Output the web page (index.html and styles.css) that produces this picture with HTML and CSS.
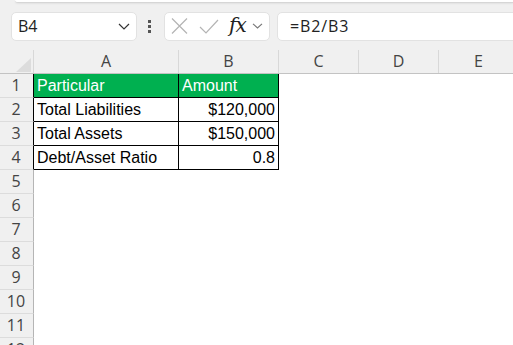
FILE: index.html
```html
<!DOCTYPE html>
<html>
<head>
<meta charset="utf-8">
<link rel="stylesheet" href="styles.css">
</head>
<body>
<div class="app">
  <div class="ribbon-edge"></div>
  <div class="formula-bar">
    <div class="name-box">
      <span class="name-text">B4</span>
      <svg class="chev" width="12" height="7" viewBox="0 0 12 7"><path d="M1 1 L6 6 L11 1" fill="none" stroke="#333" stroke-width="1.2"/></svg>
    </div>
    <div class="kebab"><i></i><i></i><i></i></div>
    <div class="fx-box">
      <svg class="ico" width="17" height="16" viewBox="0 0 17 16"><path d="M1 0.5 L16 15.5 M16 0.5 L1 15.5" fill="none" stroke="#b4b4b4" stroke-width="1.2"/></svg>
      <svg class="ico check" width="20" height="15" viewBox="0 0 20 15"><path d="M1 8 L7 14 L19 1" fill="none" stroke="#b4b4b4" stroke-width="1.2"/></svg>
      <span class="fx">fx</span>
      <svg class="chev small" width="11" height="6" viewBox="0 0 11 6"><path d="M1 0.8 L5.5 5 L10 0.8" fill="none" stroke="#777" stroke-width="1.1"/></svg>
    </div>
    <div class="formula-box"><span class="formula-text">=B2/B3</span></div>
  </div>

  <div class="sheet">
    <div class="hrow">
      <div class="corner"><div class="tri"></div></div>
      <div class="ch col-a">A</div>
      <div class="ch col-b">B</div>
      <div class="ch col-c">C</div>
      <div class="ch col-c">D</div>
      <div class="ch col-c">E</div>
    </div>

    <div class="row in-table">
      <div class="rh">1</div>
      <div class="cell col-a t green">Particular</div>
      <div class="cell col-b t green">Amount</div>
    </div>
    <div class="row in-table">
      <div class="rh">2</div>
      <div class="cell col-a t">Total Liabilities</div>
      <div class="cell col-b t num">$120,000</div>
    </div>
    <div class="row in-table">
      <div class="rh">3</div>
      <div class="cell col-a t">Total Assets</div>
      <div class="cell col-b t num">$150,000</div>
    </div>
    <div class="row in-table">
      <div class="rh">4</div>
      <div class="cell col-a t">Debt/Asset Ratio</div>
      <div class="cell col-b t num">0.8</div>
    </div>
    <div class="row"><div class="rh">5</div></div>
    <div class="row"><div class="rh">6</div></div>
    <div class="row"><div class="rh">7</div></div>
    <div class="row"><div class="rh">8</div></div>
    <div class="row"><div class="rh">9</div></div>
    <div class="row"><div class="rh">10</div></div>
    <div class="row"><div class="rh">11</div></div>
    <div class="row"><div class="rh">12</div></div>
  </div>
</div>
</body>
</html>
```

FILE: styles.css
```css
html, body {
  margin: 0;
  padding: 0;
  background: #f0f0f0;
  overflow: hidden;
}
.app {
  width: 513px;
  height: 345px;
  overflow: hidden;
  font-family: "Open Sans", "Noto Sans", sans-serif;
}
.ribbon-edge {
  height: 2px;
  margin-left: 15px;
  background: #ffffff;
  border-bottom: 1px solid #d6d6d6;
  border-bottom-left-radius: 4px;
  box-shadow: 0 1px 2px rgba(0,0,0,0.06);
}
.formula-bar {
  display: flex;
  align-items: center;
  height: 30px;
  margin-top: 8px;
  padding-left: 11px;
}
.name-box {
  box-sizing: border-box;
  flex-shrink: 0;
  width: 126px;
  height: 29px;
  background: #fff;
  border: 1px solid #e2e2e2;
  border-radius: 5px;
  display: flex;
  align-items: center;
  padding-left: 6px;
  padding-right: 6px;
}
.name-text {
  flex: 1;
  font-size: 16px;
  color: #222;
}
.chev { display: block; }
.kebab {
  flex-shrink: 0;
  width: 4px;
  margin-left: 11px;
  margin-right: 12px;
  display: flex;
  flex-direction: column;
  gap: 2px;
}
.kebab i {
  display: block;
  width: 3px;
  height: 3px;
  background: #555;
}
.fx-box {
  box-sizing: border-box;
  flex-shrink: 0;
  width: 106px;
  height: 29px;
  background: #fff;
  border: 1px solid #e2e2e2;
  border-radius: 5px;
  display: flex;
  align-items: center;
  padding-left: 6px;
}
.ico { display: block; }
.check { margin-left: 11px; }
.fx {
  font-family: "DejaVu Serif", "Liberation Serif", serif;
  font-style: italic;
  font-size: 20px;
  color: #222;
  margin-left: 10px;
  line-height: 1;
  margin-top: -2px;
  letter-spacing: -1px;
}
.chev.small { margin-left: 6px; }
.formula-box {
  box-sizing: border-box;
  flex: 1;
  height: 29px;
  margin-left: 7px;
  margin-right: -10px;
  background: #fff;
  border: 1px solid #e2e2e2;
  border-radius: 5px;
  display: flex;
  align-items: center;
  padding-left: 12px;
}
.formula-text {
  font-size: 16px;
  color: #222;
  letter-spacing: 0.9px;
}

.sheet {
  margin-top: 9px;
}
.hrow {
  display: flex;
  height: 24px;
  box-sizing: border-box;
  border-bottom: 1px solid #c3c3c3;
}
.corner {
  box-sizing: border-box;
  flex-shrink: 0;
  width: 34px;
  border-right: 1px solid #d8d8d8;
  position: relative;
}
.tri {
  position: absolute;
  right: 2px;
  bottom: 1px;
  width: 0;
  height: 0;
  border-left: 15px solid transparent;
  border-bottom: 14px solid #dcdcdc;
}
.ch {
  box-sizing: border-box;
  border-right: 1px solid #d8d8d8;
  text-align: center;
  font-size: 16px;
  color: #444;
  line-height: 23px;
}
.col-a { width: 145px; flex-shrink: 0; }
.col-b { width: 100px; flex-shrink: 0; }
.col-c { width: 80px; flex-shrink: 0; }

.row {
  display: flex;
  height: 24px;
  background: #fff;
}
.rh {
  box-sizing: border-box;
  flex-shrink: 0;
  width: 34px;
  height: 24px;
  background: #f0f0f0;
  border-right: 1px solid #b5b5b5;
  border-bottom: 1px solid #dcdcdc;
  text-align: center;
  font-size: 16px;
  color: #444;
  line-height: 23px;
  padding-right: 1px;
}
.in-table .rh { border-right-color: #000; }
.cell {
  box-sizing: border-box;
  height: 24px;
  font-family: "Liberation Sans", Arial, sans-serif;
  font-size: 16px;
  line-height: 23px;
  color: #000;
  padding: 0 3px;
  white-space: nowrap;
  overflow: hidden;
}
.cell.t {
  border-right: 1px solid #000;
  border-bottom: 1px solid #000;
}
.green {
  background: #00b050;
  color: #fff;
}
.num { text-align: right; }
```
